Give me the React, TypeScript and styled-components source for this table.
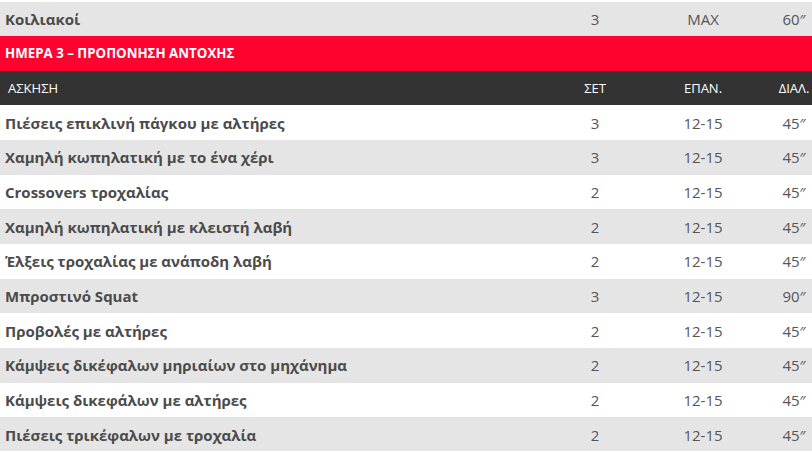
import React from 'react'
import styled, { createGlobalStyle } from 'styled-components'

const GlobalStyle = createGlobalStyle`
  body {
    margin: 0;
    background: #fff;
    overflow: hidden;
    font-family: 'Open Sans', 'Noto Sans', sans-serif;
  }
`

const Table = styled.div`
  width: 827px;
  padding-top: 1.5px;
`

const Row = styled.div<{ $shade: 'light' | 'grey' }>`
  display: grid;
  grid-template-columns: 1fr 100px 116px 66px;
  align-items: center;
  height: 34.67px;
  background: ${(p) => (p.$shade === 'grey' ? '#e5e5e5' : '#ffffff')};
  color: #4b4b4b;
  font-size: 15px;
`

const Name = styled.div`
  font-weight: 700;
  padding-left: 5px;
  white-space: nowrap;
`

const Cell = styled.div`
  text-align: center;
  color: #555;
`

const DayBar = styled.div`
  display: flex;
  align-items: center;
  height: 34.67px;
  background: #ff0330;
  color: #fff;
  font-size: 13.3px;
  font-weight: 700;
  padding-left: 5px;
`

const HeadRow = styled.div`
  display: grid;
  grid-template-columns: 1fr 100px 116px 66px;
  align-items: center;
  height: 34.67px;
  background: #333333;
  color: #fff;
  font-size: 13px;
`

const HeadName = styled.div`
  padding-left: 8px;
`

const HeadCell = styled.div`
  text-align: center;
`

const exercises: [string, string, string, string][] = [
  ['Πιέσεις επικλινή πάγκου με αλτήρες', '3', '12-15', '45″'],
  ['Χαμηλή κωπηλατική με το ένα χέρι', '3', '12-15', '45″'],
  ['Crossovers τροχαλίας', '2', '12-15', '45″'],
  ['Χαμηλή κωπηλατική με κλειστή λαβή', '2', '12-15', '45″'],
  ['Έλξεις τροχαλίας με ανάποδη λαβή', '2', '12-15', '45″'],
  ['Μπροστινό Squat', '3', '12-15', '90″'],
  ['Προβολές με αλτήρες', '2', '12-15', '45″'],
  ['Κάμψεις δικέφαλων μηριαίων στο μηχάνημα', '2', '12-15', '45″'],
  ['Κάμψεις δικεφάλων με αλτήρες', '2', '12-15', '45″'],
  ['Πιέσεις τρικέφαλων με τροχαλία', '2', '12-15', '45″'],
]

export default function App() {
  return (
    <>
      <GlobalStyle />
      <Table>
        <Row $shade="grey">
          <Name>Κοιλιακοί</Name>
          <Cell>3</Cell>
          <Cell>MAX</Cell>
          <Cell>60″</Cell>
        </Row>
        <DayBar>ΗΜΕΡΑ 3 – ΠΡΟΠΟΝΗΣΗ ΑΝΤΟΧΗΣ</DayBar>
        <HeadRow>
          <HeadName>ΑΣΚΗΣΗ</HeadName>
          <HeadCell>ΣΕΤ</HeadCell>
          <HeadCell>ΕΠΑΝ.</HeadCell>
          <HeadCell>ΔΙΑΛ.</HeadCell>
        </HeadRow>
        {exercises.map(([name, sets, reps, rest], i) => (
          <Row key={name} $shade={i % 2 === 1 ? 'grey' : 'light'}>
            <Name>{name}</Name>
            <Cell>{sets}</Cell>
            <Cell>{reps}</Cell>
            <Cell>{rest}</Cell>
          </Row>
        ))}
      </Table>
    </>
  )
}
